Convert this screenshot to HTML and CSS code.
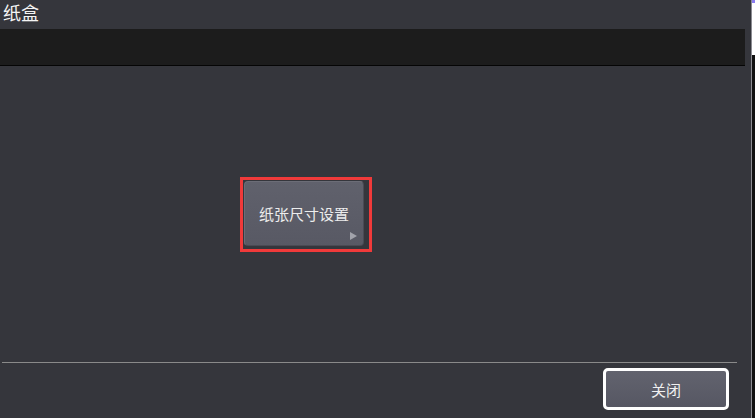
FILE: index.html
```html
<!DOCTYPE html>
<html lang="zh-CN">
<head>
    <meta charset="UTF-8">
    <meta name="viewport" content="width=device-width, initial-scale=1.0">
    <title>纸盒</title>
    <link rel="stylesheet" href="styles.css">
</head>
<body>
    <div class="screen">
        <div class="panel">
            <div class="title">纸盒</div>
            <div class="tray-bar"></div>

            <div class="content">
                <div class="focus-frame">
                    <button class="menu-button">
                        纸张尺寸设置
                        <span class="corner-arrow"></span>
                    </button>
                </div>
            </div>

            <div class="separator"></div>

            <div class="footer">
                <button class="close-button">关闭</button>
            </div>
        </div>
        <div class="edge"></div>
    </div>
</body>
</html>
```

FILE: styles.css
```css
body {
    margin: 0;
    background-color: #35363c;
    font-family: "Noto Sans CJK SC", "Noto Sans", sans-serif;
    color: #ffffff;
}

.screen {
    width: 755px;
    height: 418px;
    display: flex;
    overflow: hidden;
}

.panel {
    width: 752px;
    display: flex;
    flex-direction: column;
}

.title {
    height: 29px;
    padding-left: 3px;
    font-size: 18px;
    line-height: 24px;
    color: #f4f4f4;
}

.tray-bar {
    height: 36px;
    margin-right: 6px;
    background-color: #1c1c1c;
    border-bottom: 1px solid #050505;
}

.content {
    flex: 1;
    padding: 111px 0 0 240px;
}

.focus-frame {
    box-sizing: border-box;
    width: 132px;
    height: 75px;
    border: 3px solid #f03a3a;
    padding: 1px 2px 2px 1px;
}

.menu-button {
    position: relative;
    width: 120px;
    height: 65px;
    padding: 0;
    border: 1px solid #6c6d77;
    border-right-color: #4a4b54;
    border-bottom-color: #4a4b54;
    border-radius: 4px;
    background: linear-gradient(#60616c, #585964);
    color: #ececec;
    font-family: inherit;
    font-size: 15px;
    cursor: pointer;
}

.corner-arrow {
    position: absolute;
    right: 6px;
    bottom: 5px;
    width: 0;
    height: 0;
    border-top: 4px solid transparent;
    border-bottom: 4px solid transparent;
    border-left: 7px solid #a2a3ab;
}

.separator {
    height: 1px;
    margin: 0 14px 0 2px;
    background-color: #8a8a8a;
}

.footer {
    height: 55px;
    display: flex;
    justify-content: flex-end;
    padding: 5px 22px 0 0;
    box-sizing: border-box;
}

.close-button {
    width: 126px;
    height: 42px;
    border: 3px solid #ffffff;
    border-radius: 5px;
    background: linear-gradient(#62636e, #565763);
    color: #f0f0f0;
    font-family: inherit;
    font-size: 15px;
    cursor: pointer;
}

.edge {
    width: 3px;
    border-left: 1px solid #8c8c92;
    background: linear-gradient(#8a7cf0 0, #8a7cf0 3px, #ffffff 3px, #ffffff 55px, #111111 55px);
}
```
